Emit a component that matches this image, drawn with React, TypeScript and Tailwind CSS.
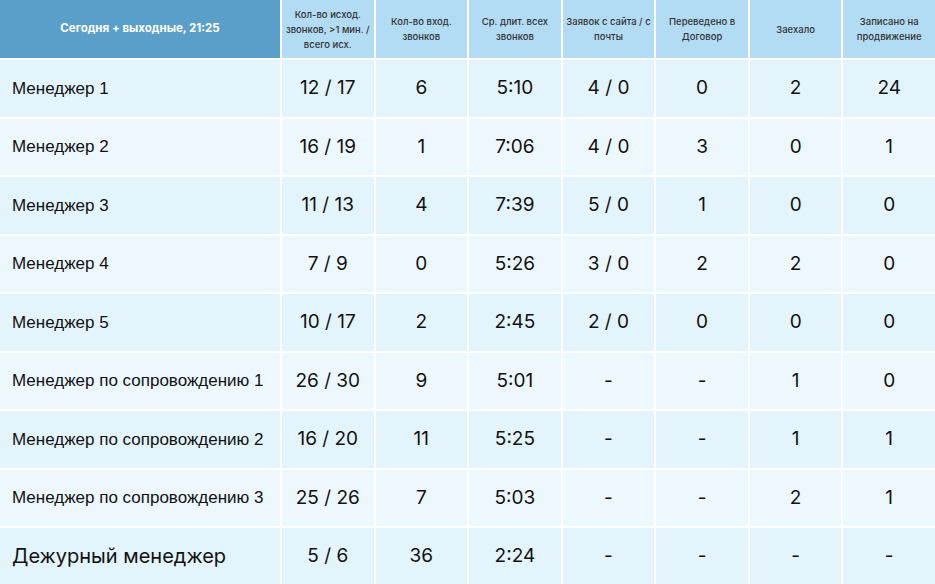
const columns = [
  'Кол-во исход.\nзвонков, >1 мин. /\nвсего исх.',
  'Кол-во вход.\nзвонков',
  'Ср. длит. всех\nзвонков',
  'Заявок с сайта / с\nпочты',
  'Переведено в\nДоговор',
  'Заехало',
  'Записано на\nпродвижение',
];

const rows = [
  { name: 'Менеджер 1', values: ['12 / 17', '6', '5:10', '4 / 0', '0', '2', '24'] },
  { name: 'Менеджер 2', values: ['16 / 19', '1', '7:06', '4 / 0', '3', '0', '1'] },
  { name: 'Менеджер 3', values: ['11 / 13', '4', '7:39', '5 / 0', '1', '0', '0'] },
  { name: 'Менеджер 4', values: ['7 / 9', '0', '5:26', '3 / 0', '2', '2', '0'] },
  { name: 'Менеджер 5', values: ['10 / 17', '2', '2:45', '2 / 0', '0', '0', '0'] },
  { name: 'Менеджер по сопровождению 1', values: ['26 / 30', '9', '5:01', '-', '-', '1', '0'] },
  { name: 'Менеджер по сопровождению 2', values: ['16 / 20', '11', '5:25', '-', '-', '1', '1'] },
  { name: 'Менеджер по сопровождению 3', values: ['25 / 26', '7', '5:03', '-', '-', '2', '1'] },
  { name: 'Дежурный менеджер', values: ['5 / 6', '36', '2:24', '-', '-', '-', '-'], big: true },
];

export default function App() {
  return (
    <div className="w-[935px] h-[584px] overflow-hidden bg-white">
      <div className="grid grid-cols-[280px_repeat(7,1fr)] grid-rows-[58px_repeat(9,56.5px)] gap-[2px]">
        <div className="bg-[#5a9fca] flex items-center justify-center text-white text-[11.5px] font-bold font-['Inter',sans-serif]">
          Сегодня + выходные, 21:25
        </div>
        {columns.map((c) => (
          <div
            key={c}
            className="bg-[#b2dcf4] flex items-center justify-center text-center whitespace-pre-line text-[9.5px] leading-[15px] font-medium text-[#333] font-['Inter',sans-serif]"
          >
            {c}
          </div>
        ))}
        {rows.map((r, i) => {
          const bg = i % 2 === 0 ? 'bg-[#e3f4fd]' : 'bg-[#ecf8fe]';
          return [
            <div
              key={r.name}
              className={`${bg} flex items-center pl-3 text-[#111] ${
                r.big
                  ? "text-[20px] font-['Inter',sans-serif]"
                  : "text-[17px] font-['Liberation_Sans',Arial,sans-serif]"
              }`}
            >
              {r.name}
            </div>,
            ...r.values.map((v, j) => (
              <div
                key={r.name + j}
                className={`${bg} flex items-center justify-center text-[19px] text-[#111] font-['Inter',sans-serif]`}
              >
                {v}
              </div>
            )),
          ];
        })}
      </div>
    </div>
  );
}
